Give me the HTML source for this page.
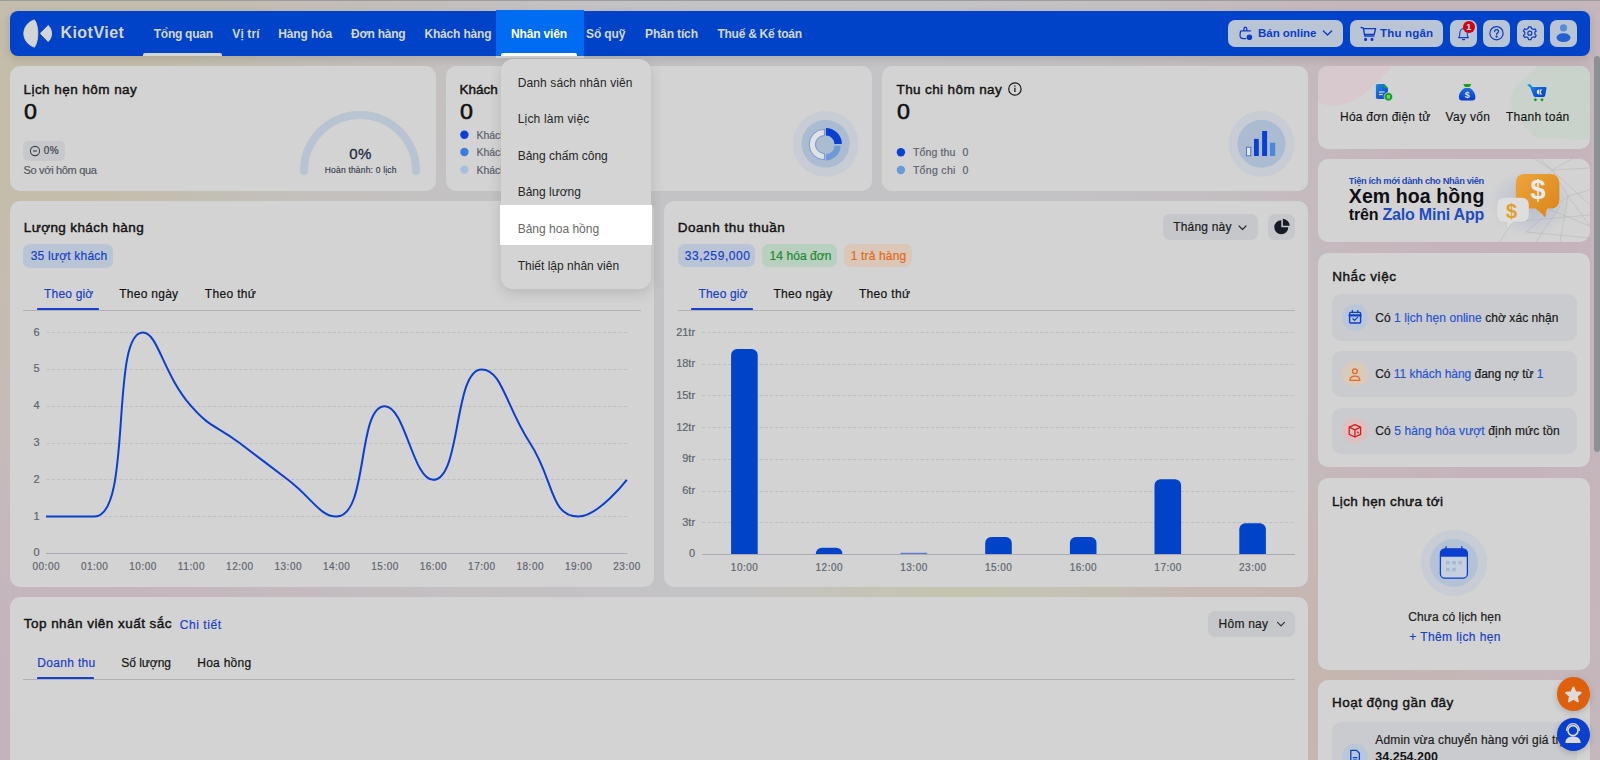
<!DOCTYPE html>
<html><head><meta charset="utf-8">
<style>
*{box-sizing:border-box;margin:0;padding:0}
html,body{width:1600px;height:760px;overflow:hidden}
body{position:relative;font-family:"Liberation Sans",sans-serif;color:#161616;background:#c6bfbe}
.abs{position:absolute}
.card{position:absolute;background:#d3d3d3;border-radius:10px;overflow:hidden}
.t{position:absolute;white-space:nowrap;line-height:1}
.nb{position:absolute;background:#b9c4d4;border-radius:7px}
svg{position:absolute;overflow:visible}
</style></head><body>
<!-- BACKGROUND -->
<div class="abs" style="left:0;top:0;width:1600px;height:760px;background:
 radial-gradient(ellipse 240px 120px at 960px 600px, rgba(197,196,174,1), rgba(197,196,174,0)),
 radial-gradient(ellipse 280px 260px at 1270px 680px, rgba(198,181,171,1), rgba(198,181,171,0)),
 radial-gradient(ellipse 420px 160px at 820px 40px, rgba(196,196,198,1), rgba(196,196,198,0)),
 radial-gradient(ellipse 700px 520px at 760px 330px, rgba(195,196,199,1), rgba(195,196,199,0.75) 50%, rgba(195,196,199,0)),
 radial-gradient(ellipse 560px 380px at 60px 120px, rgba(196,189,166,1), rgba(196,189,166,0)),
 radial-gradient(ellipse 520px 320px at 80px 740px, rgba(196,176,188,1), rgba(196,176,188,0)),
 radial-gradient(ellipse 400px 760px at 1500px 320px, rgba(197,178,187,1), rgba(197,178,187,0)),
 #c4bcbd"></div>
<div class="abs" style="left:0;top:0;width:1600px;height:1px;background:#9c9c9c"></div>
<div class="abs" style="left:1594px;top:56px;width:6px;height:396px;background:#8b9095;border-radius:3px"></div>

<!-- NAVBAR -->
<div class="abs" style="left:10px;top:11px;width:1580px;height:44.8px;background:#0043c8;border-radius:8px;box-shadow:0 3px 10px rgba(0,0,0,0.12)"></div>
<div class="abs" style="left:496.2px;top:55.8px;width:87.4px;height:1.8px;background:#cfcfcf"></div>
<div class="abs" style="left:496.2px;top:10.3px;width:87.4px;height:45.5px;background:#006cf1"></div>
<div class="abs" style="left:143px;top:53.4px;width:79px;height:2.6px;background:#d5d5d5;border-radius:2px 2px 0 0"></div>
<div class="abs" style="left:500.5px;top:53.4px;width:76.5px;height:2.6px;background:#ffffff;border-radius:2px 2px 0 0"></div>
<svg style="left:0;top:0" width="60" height="60">
 <path d="M34.4,19.8 C28.2,21.8 23.8,27.2 23.8,33.5 C23.8,39.8 28.2,45.2 34.4,47.2 C36.9,43.8 37.8,38.8 37.8,33.5 C37.8,28.2 36.9,23.2 34.4,19.8 Z" fill="#d4d4d4" stroke="#d4d4d4" stroke-width="0.8" stroke-linejoin="round"/>
 <path d="M48.2,25.8 C50.3,28 51.4,30.6 51.4,33.5 C51.4,36.4 50.3,39 48.2,41.2 L40.8,33.5 Z" fill="#d4d4d4" stroke="#d4d4d4" stroke-width="1.2" stroke-linejoin="round"/>
</svg>
<div class="nb" style="left:1228px;top:20px;width:115px;height:27px"></div>
<div class="nb" style="left:1350px;top:20px;width:93px;height:27px"></div>
<div class="nb" style="left:1450px;top:20px;width:27px;height:27px"></div>
<div class="nb" style="left:1483px;top:20px;width:27px;height:27px"></div>
<div class="nb" style="left:1517px;top:20px;width:27px;height:27px"></div>
<div class="nb" style="left:1550px;top:20px;width:27px;height:27px"></div>
<svg style="left:0;top:0" width="1600" height="60" fill="none" stroke="#0b3ccc" stroke-width="1.3" stroke-linecap="round" stroke-linejoin="round">
 <!-- bag icon -->
 <path d="M1241.6,30.8 L1250.5,30.8 M1243.6,30.8 L1244.4,27.4 L1246.2,27.4 L1247.2,30.8 M1240.6,31.2 C1240.0,34 1239.8,36.6 1240.6,37.4 C1241,38.4 1243,38.6 1245.6,38.6" />
 <circle cx="1249.4" cy="37.2" r="2.8" fill="#0b3ccc" stroke="none"/>
 <!-- chevron -->
 <path d="M1323.4,31 L1327.5,35 L1331.6,31" stroke-width="1.4"/>
 <!-- cart -->
 <path d="M1361.2,27.5 L1363.4,28.2 L1364.8,36 L1374,36 M1363.6,28.6 L1375.6,28.6 L1374.2,34.4 L1364.6,34.4" stroke-width="1.4"/>
 <circle cx="1365.6" cy="39.4" r="0.9" fill="#0b3ccc"/>
 <circle cx="1372" cy="39.4" r="0.9" fill="#0b3ccc"/>
 <!-- bell -->
 <path d="M1458.6,37.6 L1468.4,37.6 C1467.4,36.6 1467.2,35.4 1467.2,33.4 C1467.2,30.8 1465.6,28.6 1463.5,28.6 C1461.4,28.6 1459.8,30.8 1459.8,33.4 C1459.8,35.4 1459.6,36.6 1458.6,37.6 Z" stroke-width="1.1"/>
 <path d="M1462.4,39.6 L1464.6,39.6" stroke-width="1.1"/>
 <!-- help -->
 <circle cx="1496.5" cy="33.2" r="6.6" stroke-width="1.2"/>
 <path d="M1494.6,31.6 C1494.6,30.4 1495.4,29.6 1496.5,29.6 C1497.7,29.6 1498.5,30.4 1498.5,31.4 C1498.5,32.6 1496.6,33 1496.6,34.4" stroke-width="1.2"/>
 <circle cx="1496.6" cy="36.6" r="0.5" fill="#0b3ccc"/>
 <!-- gear -->
 <path d="M1528.6,26.8 L1531,26.8 L1531.6,28.6 L1533.2,29.5 L1535,28.9 L1536.2,31 L1534.8,32.3 L1534.8,34.1 L1536.2,35.4 L1535,37.5 L1533.2,36.9 L1531.6,37.8 L1531,39.6 L1528.6,39.6 L1528,37.8 L1526.4,36.9 L1524.6,37.5 L1523.4,35.4 L1524.8,34.1 L1524.8,32.3 L1523.4,31 L1524.6,28.9 L1526.4,29.5 L1528,28.6 Z" stroke-width="1.2"/>
 <circle cx="1529.8" cy="33.2" r="2" stroke-width="1.2"/>
 <!-- avatar -->
 <circle cx="1563.5" cy="27.8" r="3.6" fill="#5a8ad8" stroke="none"/>
 <ellipse cx="1563.5" cy="37.6" rx="7" ry="4.4" fill="#1f64d0" stroke="none"/>
</svg>
<div class="abs" style="left:1463px;top:21.4px;width:12px;height:12px;border-radius:50%;background:#d20012"></div>
<div class="t" style="left:1466.2px;top:23.2px;font-size:9px;font-weight:700;color:#ececec">1</div>

<!-- ROW 1 -->
<div class="card" style="left:10px;top:66px;width:426px;height:125px"></div>
<div class="card" style="left:446px;top:66px;width:426px;height:125px"></div>
<div class="card" style="left:882px;top:66px;width:426px;height:125px"></div>
<div class="abs" style="left:23px;top:141px;width:42px;height:20px;background:#c7c8cc;border-radius:5px"></div>
<svg style="left:0;top:0" width="1310" height="200">
 <circle cx="35" cy="151" r="4.6" fill="none" stroke="#3d4350" stroke-width="1.1"/>
 <path d="M33,151 L37,151" stroke="#3d4350" stroke-width="1.1"/>
 <path d="M304,171 A56,56 0 0 1 416,171" fill="none" stroke="#b8c4d2" stroke-width="8" stroke-linecap="round"/>
 <circle cx="464.4" cy="134.7" r="4.2" fill="#0b3fd6"/>
 <circle cx="464.4" cy="152" r="4.2" fill="#3d7cd8"/>
 <circle cx="464.4" cy="169.6" r="4.2" fill="#a9bedc"/>
 <circle cx="825.6" cy="143.8" r="33" fill="#c8cdd5"/>
 <circle cx="825.6" cy="143.8" r="24" fill="#abbcd2"/>
 <path d="M825.90,128.10 A16,16 0 0 1 841.90,144.10 L834.40,144.10 A8.5,8.5 0 0 0 825.90,135.60 Z" fill="#0b3fd0"/>
 <path d="M840.60,145.80 A14.6,14.6 0 0 1 826.00,160.40 L826.00,154.30 A8.5,8.5 0 0 0 834.50,145.80 Z" fill="#6e9bd6"/>
 <path d="M824.40,159.70 A15.2,15.2 0 0 1 824.40,129.30 L824.40,135.50 A9.0,9.0 0 0 0 824.40,153.50 Z" fill="#e2e2e2" stroke="#3a70d4" stroke-width="0.6"/>
 <circle cx="1014.9" cy="89" r="6.2" fill="none" stroke="#1a1a1a" stroke-width="1.2"/>
 <path d="M1014.9,87.8 L1014.9,92" stroke="#1a1a1a" stroke-width="1.3"/>
 <circle cx="1014.9" cy="85.9" r="0.75" fill="#1a1a1a"/>
 <circle cx="900.9" cy="152.3" r="4.2" fill="#0b3fd8"/>
 <circle cx="900.9" cy="170" r="4.2" fill="#6b9ad8"/>
 <circle cx="1261.5" cy="143.8" r="33" fill="#c8cdd5"/>
 <circle cx="1261.5" cy="143.8" r="24" fill="#abbcd2"/>
 <rect x="1246.4" y="147.2" width="4.4" height="8.6" fill="#e6e6e6" stroke="#2a60d0" stroke-width="0.8"/>
 <rect x="1254" y="138.9" width="4.8" height="17.1" fill="#0b3fd0"/>
 <rect x="1262.1" y="131" width="5" height="25" fill="#0b3fd0"/>
 <rect x="1270" y="142.7" width="5.2" height="13.3" fill="#4d88d8"/>
</svg>

<!-- ROW 2 -->
<div class="card" style="left:10px;top:201px;width:644px;height:386px"></div>
<div class="card" style="left:664px;top:201px;width:644px;height:386px"></div>
<div class="abs" style="left:23.3px;top:244px;width:89.7px;height:23.5px;background:#b9c5d5;border-radius:7px"></div>
<div class="abs" style="left:37px;top:308.2px;width:62px;height:2.6px;background:#1b3fd0;border-radius:1px"></div>
<div class="abs" style="left:23.3px;top:310px;width:618px;height:1px;background:#b0b2b6"></div>
<div class="abs" style="left:677.5px;top:244px;width:77.9px;height:23.4px;background:#b9c5d5;border-radius:7px"></div>
<div class="abs" style="left:762.3px;top:244px;width:74.7px;height:23.4px;background:#b9cfbf;border-radius:7px"></div>
<div class="abs" style="left:843.9px;top:244px;width:68.1px;height:23.4px;background:#d9c8b8;border-radius:7px"></div>
<div class="abs" style="left:690.7px;top:308.2px;width:62px;height:2.6px;background:#1b3fd0;border-radius:1px"></div>
<div class="abs" style="left:677.5px;top:310px;width:617.5px;height:1px;background:#b0b2b6"></div>
<div class="abs" style="left:1162.7px;top:214.3px;width:95px;height:26px;background:#c6c7cb;border-radius:7px"></div>
<div class="abs" style="left:1268.3px;top:214.3px;width:26.3px;height:26px;background:#c6c7cb;border-radius:7px"></div>
<svg style="left:0;top:0" width="1310" height="600">
<path d="M46.5,516.5 L627.5,516.5" stroke="#c0c1c4" stroke-width="1" stroke-dasharray="3.6 1.6"/>
<path d="M46.5,479.5 L627.5,479.5" stroke="#c0c1c4" stroke-width="1" stroke-dasharray="3.6 1.6"/>
<path d="M46.5,443.5 L627.5,443.5" stroke="#c0c1c4" stroke-width="1" stroke-dasharray="3.6 1.6"/>
<path d="M46.5,406.5 L627.5,406.5" stroke="#c0c1c4" stroke-width="1" stroke-dasharray="3.6 1.6"/>
<path d="M46.5,369.5 L627.5,369.5" stroke="#c0c1c4" stroke-width="1" stroke-dasharray="3.6 1.6"/>
<path d="M46.5,332.5 L627.5,332.5" stroke="#c0c1c4" stroke-width="1" stroke-dasharray="3.6 1.6"/>
<path d="M46,553.5 L627.5,553.5" stroke="#a9abb2" stroke-width="1"/>
<path d="M46.00,516.60 C46.00,516.60 84.58,516.60 94.40,516.60 C132.98,516.60 109.72,332.60 142.80,332.60 C158.12,332.60 162.56,373.54 191.20,406.20 C210.96,428.74 215.40,424.60 239.60,443.00 C263.80,461.40 263.80,461.40 288.00,479.80 C312.20,498.20 320.17,516.60 336.40,516.60 C368.57,516.60 356.84,406.20 384.80,406.20 C405.24,406.20 412.76,479.80 433.20,479.80 C461.16,479.80 453.64,369.40 481.60,369.40 C502.04,369.40 505.80,406.20 530.00,443.00 C554.20,479.80 549.76,516.60 578.40,516.60 C598.16,516.60 626.80,479.80 626.80,479.80" fill="none" stroke="#0b3fd0" stroke-width="2"/>
<path d="M702,522.5 L1295,522.5" stroke="#c0c1c4" stroke-width="1" stroke-dasharray="3.6 1.6"/>
<path d="M702,491.5 L1295,491.5" stroke="#c0c1c4" stroke-width="1" stroke-dasharray="3.6 1.6"/>
<path d="M702,459.5 L1295,459.5" stroke="#c0c1c4" stroke-width="1" stroke-dasharray="3.6 1.6"/>
<path d="M702,427.5 L1295,427.5" stroke="#c0c1c4" stroke-width="1" stroke-dasharray="3.6 1.6"/>
<path d="M702,395.5 L1295,395.5" stroke="#c0c1c4" stroke-width="1" stroke-dasharray="3.6 1.6"/>
<path d="M702,364.5 L1295,364.5" stroke="#c0c1c4" stroke-width="1" stroke-dasharray="3.6 1.6"/>
<path d="M702,332.5 L1295,332.5" stroke="#c0c1c4" stroke-width="1" stroke-dasharray="3.6 1.6"/>
<path d="M702,554.5 L1295,554.5" stroke="#a9abb2" stroke-width="1"/>
<path d="M731.1,554 L731.1,355.0 A6,6 0 0 1 737.1,349.0 L751.7,349.0 A6,6 0 0 1 757.7,355.0 L757.7,554 Z" fill="#0043c8"/>
<path d="M815.8,554 L815.8,553.7 A6,6 0 0 1 821.8,547.7 L836.4,547.7 A6,6 0 0 1 842.4,553.7 L842.4,554 Z" fill="#0043c8"/>
<rect x="900.5" y="552.8" width="26.6" height="1.2" fill="#5a7ad8"/>
<path d="M985.2,554 L985.2,543.0 A6,6 0 0 1 991.2,537.0 L1005.8,537.0 A6,6 0 0 1 1011.8,543.0 L1011.8,554 Z" fill="#0043c8"/>
<path d="M1069.9,554 L1069.9,543.0 A6,6 0 0 1 1075.9,537.0 L1090.5,537.0 A6,6 0 0 1 1096.5,543.0 L1096.5,554 Z" fill="#0043c8"/>
<path d="M1154.5,554 L1154.5,485.2 A6,6 0 0 1 1160.5,479.2 L1175.1,479.2 A6,6 0 0 1 1181.1,485.2 L1181.1,554 Z" fill="#0043c8"/>
<path d="M1239.3,554 L1239.3,529.3 A6,6 0 0 1 1245.3,523.3 L1259.9,523.3 A6,6 0 0 1 1265.9,529.3 L1265.9,554 Z" fill="#0043c8"/>
</svg>

<!-- ROW 3 -->
<div class="card" style="left:10px;top:597px;width:1298px;height:200px"></div>
<div class="abs" style="left:36.8px;top:677px;width:57.4px;height:2.6px;background:#1b3fd0;border-radius:1px"></div>
<div class="abs" style="left:23.3px;top:679px;width:1271.7px;height:1px;background:#b0b2b6"></div>
<div class="abs" style="left:1208px;top:610.6px;width:86.7px;height:26.8px;background:#c6c7cb;border-radius:7px"></div>
<svg style="left:0;top:0" width="1310" height="760" fill="none" stroke="#303030" stroke-width="1.2" stroke-linecap="round" stroke-linejoin="round">
 <path d="M1239,226 L1242.5,229.5 L1246,226"/>
 <path d="M1277.6,622.4 L1281,625.8 L1284.4,622.4"/>
 <path d="M1281.3,220.3 L1281.3,227.3 L1288.3,227.3 A7,7 0 1 1 1281.3,220.3 Z" fill="#161a22" stroke="none"/>
 <path d="M1282.9,218.8 A7.4,7.4 0 0 1 1289.8,225.7 L1282.9,225.7 Z" fill="#161a22" stroke="none"/>
</svg>

<!-- RIGHT COLUMN -->
<div class="card" style="left:1318px;top:66px;width:272px;height:83px">
 <svg style="left:0;top:0" width="272" height="83"><path d="M0,0 L74,0 C58,18 40,38 18,39.5 C9,40 3,38 0,35 Z" fill="#d7c9cd"/><path d="M220,0 L272,0 L272,74 L219,72 C210,64 197,50 193,40 C190,32 194,24 200,18 Z" fill="#c9d3cb"/></svg>
</div>
<div class="card" style="left:1318px;top:159px;width:272px;height:83px"></div>
<div class="card" style="left:1318px;top:253px;width:272px;height:214px"></div>
<div class="card" style="left:1318px;top:478px;width:272px;height:192px"></div>
<div class="card" style="left:1318px;top:680px;width:272px;height:200px"></div>
<div class="abs" style="left:1332px;top:294px;width:245px;height:47px;background:#cacbcf;border-radius:9px"></div>
<div class="abs" style="left:1332px;top:351px;width:245px;height:46px;background:#cacbcf;border-radius:9px"></div>
<div class="abs" style="left:1332px;top:407.5px;width:245px;height:46.5px;background:#cacbcf;border-radius:9px"></div>
<div class="abs" style="left:1332px;top:722px;width:245px;height:60px;background:#cacbcf;border-radius:9px"></div>
<svg style="left:0;top:0" width="1600" height="760">
 <defs>
  <linearGradient id="gdoc" x1="0" y1="0" x2="1" y2="1"><stop offset="0" stop-color="#1a8ee0"/><stop offset="1" stop-color="#0a3ad0"/></linearGradient>
  <linearGradient id="gbag" x1="0" y1="0" x2="0" y2="1"><stop offset="0" stop-color="#1f6ee0"/><stop offset="1" stop-color="#0a38cc"/></linearGradient>
  <linearGradient id="gcart" x1="0" y1="0" x2="1" y2="1"><stop offset="0" stop-color="#1aa0e8"/><stop offset="0.5" stop-color="#1060d8"/><stop offset="1" stop-color="#0a3ccc"/></linearGradient>
  <linearGradient id="gor" x1="0" y1="0" x2="1" y2="1"><stop offset="0" stop-color="#eea43a"/><stop offset="1" stop-color="#d98518"/></linearGradient>
  <radialGradient id="gsh" cx="0.5" cy="0.5" r="0.5"><stop offset="0" stop-color="#9aa8c8" stop-opacity="0.55"/><stop offset="1" stop-color="#9aa8c8" stop-opacity="0"/></radialGradient>
  <clipPath id="cbn"><rect x="1318" y="159" width="272" height="83" rx="10"/></clipPath>
 </defs>
 <!-- doc icon -->
 <path d="M1377.4,83.9 L1384,83.9 L1387.9,88 L1387.9,97.2 Q1387.9,98.9 1386.2,98.9 L1377.6,98.9 Q1375.9,98.9 1375.9,97.2 L1375.9,85.6 Q1375.9,83.9 1377.4,83.9 Z" fill="url(#gdoc)"/>
 <path d="M1384,83.9 L1387.9,88 L1384,88 Z" fill="#12a020"/>
 <rect x="1379" y="91.4" width="5.6" height="1.2" fill="#d8dce8"/>
 <rect x="1379" y="93.9" width="3.8" height="1.2" fill="#d8dce8"/>
 <circle cx="1388.4" cy="96.8" r="4.3" fill="#14a41c" stroke="#d3d3d3" stroke-width="0.8"/>
 <rect x="1386.9" y="95" width="3" height="3.6" fill="#7ccc80"/>
 <!-- money bag -->
 <path d="M1463.2,84 L1471.4,84 L1469.6,87 L1465,87 Z" fill="#12a41a"/>
 <path d="M1465,88 L1469.6,88 C1473.4,90 1475.6,94 1475.4,97.6 C1475.3,99.8 1474.2,100.6 1472.4,100.6 L1461.9,100.6 C1460.1,100.6 1459,99.8 1458.9,97.6 C1458.7,94 1460.9,90 1465,88 Z" fill="url(#gbag)"/>
 <text x="1467.2" y="97.6" font-family="Liberation Sans" font-size="9" font-weight="700" fill="#dfe3ee" text-anchor="middle">$</text>
 <!-- cart -->
 <path d="M1527.6,84.6 C1528.4,84 1529.6,84 1530.6,84.6 L1532.4,86.9 L1545.4,86.9 C1546.2,86.9 1546.6,87.6 1546.4,88.4 L1545.2,95.6 C1545,96.4 1544.4,96.9 1543.6,96.9 L1535,96.9 C1534.2,96.9 1533.6,96.4 1533.4,95.6 L1530.2,87.4 L1528.2,86 C1527.4,85.6 1527.2,85 1527.6,84.6 Z" fill="url(#gcart)"/>
 <path d="M1539.2,89.3 C1537.6,89.6 1536.8,90.8 1536.8,92 C1536.8,93.2 1537.6,94.4 1539.2,94.7 Z M1540,89.6 L1542.2,89.6 L1540.6,92 L1542.2,94.4 L1540,94.4 L1539.6,92 Z" fill="#dfe3ee"/>
 <path d="M1535.4,98 L1537.2,99.8 L1535.4,101.6 L1533.6,99.8 Z M1542,98 L1543.8,99.8 L1542,101.6 L1540.2,99.8 Z" fill="#10a020"/>

 <!-- banner network lines -->
 <g clip-path="url(#cbn)" stroke="#b8b8bc" stroke-width="0.6" fill="none">
  <path d="M1535,159 L1552,170 L1590,168 M1552,170 L1568,196 L1590,190 M1568,196 L1560,242 M1568,196 L1590,226 M1552,170 L1526,200 L1500,242 M1568,196 L1526,232 L1590,238 M1540,159 L1590,205 M1572,159 L1552,170 M1526,200 L1590,226 M1536,242 L1560,206 M1510,222 L1590,215"/>
 </g>
 <!-- bubbles -->
 <ellipse cx="1530" cy="203" rx="42" ry="34" fill="url(#gsh)"/>
 <path d="M1525,173.9 L1550,173.9 Q1559.4,173.9 1559.4,183.4 L1559.4,199.4 Q1559.4,208.4 1550.4,208.4 L1547.2,208.4 Q1545.6,212 1545.4,217.6 Q1540.4,212 1535.6,208.4 L1525,208.4 Q1515.8,208.4 1515.8,199.2 L1515.8,183.2 Q1515.8,173.9 1525,173.9 Z" fill="url(#gor)"/>
 <text x="1538" y="199.4" font-family="Liberation Sans" font-size="27" font-weight="700" fill="#ebebeb" text-anchor="middle">$</text>
 <path d="M1505,197.7 L1521,197.7 Q1528.8,197.7 1528.8,205.5 L1528.8,214 Q1528.8,221.8 1521,221.8 L1513.4,221.8 Q1510,224.6 1507.6,228.2 Q1507,224.4 1507.4,221.8 L1505,221.8 Q1497.2,221.8 1497.2,214 L1497.2,205.5 Q1497.2,197.7 1505,197.7 Z" fill="#dedede"/>
 <text x="1511.6" y="217.6" font-family="Liberation Sans" font-size="20" font-weight="700" fill="#e2a028" text-anchor="middle">$</text>

 <!-- nhac viec icons -->
 <circle cx="1355.1" cy="317.4" r="13.2" fill="#bac7d8"/>
 <circle cx="1354.9" cy="374.1" r="13" fill="#d9cbba"/>
 <circle cx="1354.9" cy="430.7" r="13" fill="#dbc1c2"/>
 <g fill="none" stroke="#0b3fd0" stroke-width="1.4" stroke-linejoin="round" stroke-linecap="round">
  <rect x="1349.6" y="312.4" width="11" height="10.6" rx="1"/>
  <path d="M1349.6,315.4 L1360.6,315.4" stroke-width="2.2"/>
  <path d="M1352.4,310.8 L1352.4,312.6 M1357.8,310.8 L1357.8,312.6"/>
  <path d="M1352.8,318.8 L1354.6,320.4 L1357.6,317.4" stroke-width="1.2"/>
 </g>
 <g fill="none" stroke="#e86a1a" stroke-width="1.3" stroke-linecap="round">
  <circle cx="1354.9" cy="371.3" r="2.4"/>
  <path d="M1350,380.4 C1350,377.6 1352,376.2 1354.9,376.2 C1357.8,376.2 1359.8,377.6 1359.8,380.4 Z" stroke-linejoin="round"/>
 </g>
 <g fill="none" stroke="#dc1a1a" stroke-width="1.3" stroke-linejoin="round">
  <path d="M1354.9,424.6 L1360.6,427.2 L1360.6,434.4 L1354.9,437 L1349.2,434.4 L1349.2,427.2 Z"/>
  <path d="M1349.2,427.2 L1354.9,429.8 L1360.6,427.2 M1354.9,429.8 L1354.9,437"/>
  <path d="M1357.2,431.6 L1358.8,433.4"/>
 </g>

 <!-- lich hen chua toi icon -->
 <circle cx="1454" cy="562.8" r="33.3" fill="#c8cdd5"/>
 <circle cx="1454" cy="562.8" r="24" fill="#b3c2d5"/>
 <rect x="1440.4" y="548.8" width="27" height="29.4" rx="4.5" fill="#c6d0de" stroke="#0b3fd0" stroke-width="1.3"/>
 <path d="M1440.4,553.4 Q1440.4,548.8 1445,548.8 L1462.8,548.8 Q1467.4,548.8 1467.4,553.4 L1467.4,556.8 L1440.4,556.8 Z" fill="#0b3fd0"/>
 <path d="M1446,546.6 L1446,549.6 M1461.8,546.6 L1461.8,549.6" stroke="#0b3fd0" stroke-width="1.3" stroke-linecap="round"/>
 <g fill="#a8b8d2">
  <rect x="1446" y="561" width="3.6" height="3.4"/><rect x="1452.2" y="561" width="3.6" height="3.4"/><rect x="1458.4" y="561" width="3.6" height="3.4"/>
  <rect x="1446" y="567.8" width="3.6" height="3.4"/><rect x="1452.2" y="567.8" width="3.6" height="3.4"/>
 </g>

 <!-- hoat dong icon -->
 <circle cx="1355" cy="756.4" r="13" fill="#bac7d8"/>
 <path d="M1350.8,750.4 L1356.6,750.4 L1359.4,753.2 L1359.4,763 L1350.8,763 Z" fill="none" stroke="#0b3fd0" stroke-width="1.3" stroke-linejoin="round"/>
 <path d="M1352.8,757.6 L1357.4,757.6 M1352.8,760 L1357.4,760" stroke="#0b3fd0" stroke-width="1.1"/>
</svg>


<div class="t" style="left:60.40px;top:25.25px;font-size:16px;font-weight:700;color:#d4d4d4;letter-spacing:0.478px;">KiotViet</div>
<div class="t" style="left:153.80px;top:27.59px;font-size:12px;font-weight:700;color:#d3d7e1;letter-spacing:-0.266px;">Tổng quan</div>
<div class="t" style="left:232.30px;top:27.59px;font-size:12px;font-weight:700;color:#d3d7e1;letter-spacing:0.106px;">Vị trí</div>
<div class="t" style="left:278.20px;top:27.59px;font-size:12px;font-weight:700;color:#d3d7e1;letter-spacing:-0.082px;">Hàng hóa</div>
<div class="t" style="left:351.00px;top:27.59px;font-size:12px;font-weight:700;color:#d3d7e1;letter-spacing:-0.290px;">Đơn hàng</div>
<div class="t" style="left:424.50px;top:27.59px;font-size:12px;font-weight:700;color:#d3d7e1;letter-spacing:-0.186px;">Khách hàng</div>
<div class="t" style="left:511.00px;top:27.59px;font-size:12px;font-weight:700;color:#ffffff;letter-spacing:-0.170px;">Nhân viên</div>
<div class="t" style="left:586.00px;top:27.59px;font-size:12px;font-weight:700;color:#d3d7e1;letter-spacing:-0.103px;">Sổ quỹ</div>
<div class="t" style="left:645.00px;top:27.59px;font-size:12px;font-weight:700;color:#d3d7e1;letter-spacing:-0.127px;">Phân tích</div>
<div class="t" style="left:717.50px;top:27.59px;font-size:12px;font-weight:700;color:#d3d7e1;letter-spacing:-0.270px;">Thuế &amp; Kế toán</div>
<div class="t" style="left:1258.00px;top:27.56px;font-size:11.5px;font-weight:700;color:#0b3ccc;letter-spacing:-0.031px;">Bán online</div>
<div class="t" style="left:1380.00px;top:27.56px;font-size:11.5px;font-weight:700;color:#0b3ccc;letter-spacing:0.179px;">Thu ngân</div>
<div class="t" style="left:23.50px;top:82.87px;font-size:13.5px;font-weight:400;color:#141414;letter-spacing:0.448px;-webkit-text-stroke:0.45px #141414">Lịch hẹn hôm nay</div>
<div class="t" style="left:23.60px;top:100.85px;font-size:21.2px;font-weight:400;color:#101010;-webkit-text-stroke:0.55px #101010;transform:scaleX(1.1);transform-origin:left">0</div>
<div class="t" style="left:43.70px;top:146.03px;font-size:10px;font-weight:400;color:#3d4350;letter-spacing:0.547px;-webkit-text-stroke-width:0.2px;">0%</div>
<div class="t" style="left:23.50px;top:164.89px;font-size:11px;font-weight:400;color:#555a64;letter-spacing:-0.319px;-webkit-text-stroke-width:0.2px;">So với hôm qua</div>
<div class="t" style="left:349.30px;top:145.60px;font-size:15px;font-weight:400;color:#1d2a3e;letter-spacing:0.312px;-webkit-text-stroke:0.3px #1d2a3e">0%</div>
<div class="t" style="left:324.80px;top:166.00px;font-size:8.5px;font-weight:400;color:#333c4c;letter-spacing:0.186px;-webkit-text-stroke:0.15px #333c4c">Hoàn thành: 0 lịch</div>
<div class="t" style="left:459.50px;top:82.87px;font-size:13.5px;font-weight:400;color:#141414;-webkit-text-stroke:0.45px #141414">Khách hàng hôm nay</div>
<div class="t" style="left:459.60px;top:100.85px;font-size:21.2px;font-weight:400;color:#101010;-webkit-text-stroke:0.55px #101010;transform:scaleX(1.1);transform-origin:left">0</div>
<div class="t" style="left:476.40px;top:129.71px;font-size:10.5px;font-weight:400;color:#5a6070;-webkit-text-stroke-width:0.2px;">Khách mới</div>
<div class="t" style="left:476.40px;top:147.01px;font-size:10.5px;font-weight:400;color:#5a6070;-webkit-text-stroke-width:0.2px;">Khách quay lại</div>
<div class="t" style="left:476.40px;top:164.61px;font-size:10.5px;font-weight:400;color:#5a6070;-webkit-text-stroke-width:0.2px;">Khách vãng lai</div>
<div class="t" style="left:896.50px;top:82.87px;font-size:13.5px;font-weight:400;color:#141414;letter-spacing:0.385px;-webkit-text-stroke:0.45px #141414">Thu chi hôm nay</div>
<div class="t" style="left:896.60px;top:100.85px;font-size:21.2px;font-weight:400;color:#101010;-webkit-text-stroke:0.55px #101010;transform:scaleX(1.1);transform-origin:left">0</div>
<div class="t" style="left:912.90px;top:147.21px;font-size:10.5px;font-weight:400;color:#5d6270;letter-spacing:0.150px;-webkit-text-stroke-width:0.2px;">Tổng thu</div>
<div class="t" style="left:962.60px;top:147.21px;font-size:10.5px;font-weight:400;color:#5d6270;-webkit-text-stroke-width:0.2px;">0</div>
<div class="t" style="left:912.90px;top:164.81px;font-size:10.5px;font-weight:400;color:#5d6270;letter-spacing:0.317px;-webkit-text-stroke-width:0.2px;">Tổng chi</div>
<div class="t" style="left:962.60px;top:164.81px;font-size:10.5px;font-weight:400;color:#5d6270;-webkit-text-stroke-width:0.2px;">0</div>
<div class="t" style="left:23.80px;top:221.37px;font-size:13.5px;font-weight:400;color:#141414;letter-spacing:0.394px;-webkit-text-stroke:0.45px #141414">Lượng khách hàng</div>
<div class="t" style="left:30.70px;top:249.84px;font-size:12px;font-weight:400;color:#1a3fc6;letter-spacing:0.212px;-webkit-text-stroke-width:0.2px;">35 lượt khách</div>
<div class="t" style="left:44.10px;top:287.84px;font-size:12px;font-weight:400;color:#1a3fc6;letter-spacing:0.171px;-webkit-text-stroke-width:0.2px;">Theo giờ</div>
<div class="t" style="left:119.20px;top:287.84px;font-size:12px;font-weight:400;color:#141414;letter-spacing:0.273px;-webkit-text-stroke-width:0.2px;">Theo ngày</div>
<div class="t" style="left:204.80px;top:287.84px;font-size:12px;font-weight:400;color:#141414;letter-spacing:0.338px;-webkit-text-stroke-width:0.2px;">Theo thứ</div>
<div class="t" style="left:33.38px;top:547.49px;font-size:11px;font-weight:400;color:#5f6670;-webkit-text-stroke-width:0.2px;">0</div>
<div class="t" style="left:33.38px;top:510.69px;font-size:11px;font-weight:400;color:#5f6670;-webkit-text-stroke-width:0.2px;">1</div>
<div class="t" style="left:33.38px;top:473.89px;font-size:11px;font-weight:400;color:#5f6670;-webkit-text-stroke-width:0.2px;">2</div>
<div class="t" style="left:33.38px;top:437.09px;font-size:11px;font-weight:400;color:#5f6670;-webkit-text-stroke-width:0.2px;">3</div>
<div class="t" style="left:33.38px;top:400.29px;font-size:11px;font-weight:400;color:#5f6670;-webkit-text-stroke-width:0.2px;">4</div>
<div class="t" style="left:33.38px;top:363.49px;font-size:11px;font-weight:400;color:#5f6670;-webkit-text-stroke-width:0.2px;">5</div>
<div class="t" style="left:33.38px;top:326.69px;font-size:11px;font-weight:400;color:#5f6670;-webkit-text-stroke-width:0.2px;">6</div>
<div class="t" style="left:32.50px;top:561.83px;font-size:10px;font-weight:400;color:#5f6670;letter-spacing:0.492px;-webkit-text-stroke-width:0.2px;">00:00</div>
<div class="t" style="left:80.90px;top:561.83px;font-size:10px;font-weight:400;color:#5f6670;letter-spacing:0.492px;-webkit-text-stroke-width:0.2px;">01:00</div>
<div class="t" style="left:129.30px;top:561.83px;font-size:10px;font-weight:400;color:#5f6670;letter-spacing:0.492px;-webkit-text-stroke-width:0.2px;">10:00</div>
<div class="t" style="left:177.70px;top:561.83px;font-size:10px;font-weight:400;color:#5f6670;letter-spacing:0.676px;-webkit-text-stroke-width:0.2px;">11:00</div>
<div class="t" style="left:226.10px;top:561.83px;font-size:10px;font-weight:400;color:#5f6670;letter-spacing:0.492px;-webkit-text-stroke-width:0.2px;">12:00</div>
<div class="t" style="left:274.50px;top:561.83px;font-size:10px;font-weight:400;color:#5f6670;letter-spacing:0.492px;-webkit-text-stroke-width:0.2px;">13:00</div>
<div class="t" style="left:322.90px;top:561.83px;font-size:10px;font-weight:400;color:#5f6670;letter-spacing:0.492px;-webkit-text-stroke-width:0.2px;">14:00</div>
<div class="t" style="left:371.30px;top:561.83px;font-size:10px;font-weight:400;color:#5f6670;letter-spacing:0.492px;-webkit-text-stroke-width:0.2px;">15:00</div>
<div class="t" style="left:419.70px;top:561.83px;font-size:10px;font-weight:400;color:#5f6670;letter-spacing:0.492px;-webkit-text-stroke-width:0.2px;">16:00</div>
<div class="t" style="left:468.10px;top:561.83px;font-size:10px;font-weight:400;color:#5f6670;letter-spacing:0.492px;-webkit-text-stroke-width:0.2px;">17:00</div>
<div class="t" style="left:516.50px;top:561.83px;font-size:10px;font-weight:400;color:#5f6670;letter-spacing:0.492px;-webkit-text-stroke-width:0.2px;">18:00</div>
<div class="t" style="left:564.90px;top:561.83px;font-size:10px;font-weight:400;color:#5f6670;letter-spacing:0.492px;-webkit-text-stroke-width:0.2px;">19:00</div>
<div class="t" style="left:613.30px;top:561.83px;font-size:10px;font-weight:400;color:#5f6670;letter-spacing:0.492px;-webkit-text-stroke-width:0.2px;">23:00</div>
<div class="t" style="left:677.80px;top:220.57px;font-size:13.5px;font-weight:400;color:#141414;letter-spacing:0.518px;-webkit-text-stroke:0.45px #141414">Doanh thu thuần</div>
<div class="t" style="left:684.70px;top:249.84px;font-size:12px;font-weight:400;color:#1a3fc6;letter-spacing:0.582px;-webkit-text-stroke-width:0.2px;">33,259,000</div>
<div class="t" style="left:769.60px;top:249.84px;font-size:12px;font-weight:400;color:#1f8a30;letter-spacing:0.070px;-webkit-text-stroke-width:0.2px;">14 hóa đơn</div>
<div class="t" style="left:850.80px;top:249.84px;font-size:12px;font-weight:400;color:#e26a1c;letter-spacing:0.150px;-webkit-text-stroke-width:0.2px;">1 trả hàng</div>
<div class="t" style="left:698.50px;top:288.34px;font-size:12px;font-weight:400;color:#1a3fc6;letter-spacing:0.156px;-webkit-text-stroke-width:0.2px;">Theo giờ</div>
<div class="t" style="left:773.50px;top:288.34px;font-size:12px;font-weight:400;color:#141414;letter-spacing:0.260px;-webkit-text-stroke-width:0.2px;">Theo ngày</div>
<div class="t" style="left:858.90px;top:288.34px;font-size:12px;font-weight:400;color:#141414;letter-spacing:0.338px;-webkit-text-stroke-width:0.2px;">Theo thứ</div>
<div class="t" style="left:1173.20px;top:221.34px;font-size:12px;font-weight:400;color:#202020;letter-spacing:0.198px;-webkit-text-stroke-width:0.2px;">Tháng này</div>
<div class="t" style="left:688.98px;top:548.49px;font-size:11px;font-weight:400;color:#5f6670;-webkit-text-stroke-width:0.2px;">0</div>
<div class="t" style="left:682.26px;top:516.80px;font-size:11px;font-weight:400;color:#5f6670;-webkit-text-stroke-width:0.2px;">3tr</div>
<div class="t" style="left:682.26px;top:485.11px;font-size:11px;font-weight:400;color:#5f6670;-webkit-text-stroke-width:0.2px;">6tr</div>
<div class="t" style="left:682.26px;top:453.42px;font-size:11px;font-weight:400;color:#5f6670;-webkit-text-stroke-width:0.2px;">9tr</div>
<div class="t" style="left:676.13px;top:421.73px;font-size:11px;font-weight:400;color:#5f6670;-webkit-text-stroke-width:0.2px;">12tr</div>
<div class="t" style="left:676.13px;top:390.04px;font-size:11px;font-weight:400;color:#5f6670;-webkit-text-stroke-width:0.2px;">15tr</div>
<div class="t" style="left:676.13px;top:358.35px;font-size:11px;font-weight:400;color:#5f6670;-webkit-text-stroke-width:0.2px;">18tr</div>
<div class="t" style="left:676.13px;top:326.66px;font-size:11px;font-weight:400;color:#5f6670;-webkit-text-stroke-width:0.2px;">21tr</div>
<div class="t" style="left:730.85px;top:562.53px;font-size:10px;font-weight:400;color:#5f6670;letter-spacing:0.492px;-webkit-text-stroke-width:0.2px;">10:00</div>
<div class="t" style="left:815.55px;top:562.53px;font-size:10px;font-weight:400;color:#5f6670;letter-spacing:0.492px;-webkit-text-stroke-width:0.2px;">12:00</div>
<div class="t" style="left:900.25px;top:562.53px;font-size:10px;font-weight:400;color:#5f6670;letter-spacing:0.492px;-webkit-text-stroke-width:0.2px;">13:00</div>
<div class="t" style="left:984.95px;top:562.53px;font-size:10px;font-weight:400;color:#5f6670;letter-spacing:0.492px;-webkit-text-stroke-width:0.2px;">15:00</div>
<div class="t" style="left:1069.65px;top:562.53px;font-size:10px;font-weight:400;color:#5f6670;letter-spacing:0.492px;-webkit-text-stroke-width:0.2px;">16:00</div>
<div class="t" style="left:1154.35px;top:562.53px;font-size:10px;font-weight:400;color:#5f6670;letter-spacing:0.492px;-webkit-text-stroke-width:0.2px;">17:00</div>
<div class="t" style="left:1239.05px;top:562.53px;font-size:10px;font-weight:400;color:#5f6670;letter-spacing:0.492px;-webkit-text-stroke-width:0.2px;">23:00</div>
<div class="t" style="left:23.80px;top:617.27px;font-size:13.5px;font-weight:400;color:#141414;letter-spacing:0.457px;-webkit-text-stroke:0.45px #141414">Top nhân viên xuất sắc</div>
<div class="t" style="left:179.80px;top:618.54px;font-size:12px;font-weight:400;color:#1a3fc6;letter-spacing:0.549px;-webkit-text-stroke-width:0.2px;">Chi tiết</div>
<div class="t" style="left:37.30px;top:657.24px;font-size:12px;font-weight:400;color:#1a3fc6;letter-spacing:0.314px;-webkit-text-stroke-width:0.2px;">Doanh thu</div>
<div class="t" style="left:121.30px;top:657.24px;font-size:12px;font-weight:400;color:#141414;letter-spacing:-0.034px;-webkit-text-stroke-width:0.2px;">Số lượng</div>
<div class="t" style="left:197.20px;top:657.24px;font-size:12px;font-weight:400;color:#141414;letter-spacing:0.279px;-webkit-text-stroke-width:0.2px;">Hoa hồng</div>
<div class="t" style="left:1218.60px;top:618.34px;font-size:12px;font-weight:400;color:#202020;letter-spacing:0.228px;-webkit-text-stroke-width:0.2px;">Hôm nay</div>
<div class="t" style="left:1340.10px;top:111.34px;font-size:12px;font-weight:400;color:#151515;letter-spacing:0.215px;-webkit-text-stroke:0.15px #151515">Hóa đơn điện tử</div>
<div class="t" style="left:1445.60px;top:111.34px;font-size:12px;font-weight:400;color:#151515;letter-spacing:0.305px;-webkit-text-stroke:0.15px #151515">Vay vốn</div>
<div class="t" style="left:1505.90px;top:111.34px;font-size:12px;font-weight:400;color:#151515;letter-spacing:0.298px;-webkit-text-stroke:0.15px #151515">Thanh toán</div>
<div class="t" style="left:1348.80px;top:176.53px;font-size:9.3px;font-weight:700;color:#2249b8;letter-spacing:-0.347px;">Tiện ích mới dành cho Nhân viên</div>
<div class="t" style="left:1348.80px;top:186.69px;font-size:19.5px;font-weight:700;color:#0e0e14;letter-spacing:0.105px;">Xem hoa hồng</div>
<div class="t" style="left:1348.80px;top:206.95px;font-size:16px;font-weight:700;color:#0e0e14;letter-spacing:-0.203px;">trên <span style="color:#1f4bc4">Zalo Mini App</span></div>
<div class="t" style="left:1332.20px;top:269.57px;font-size:13.5px;font-weight:400;color:#141414;letter-spacing:0.565px;-webkit-text-stroke:0.45px #141414">Nhắc việc</div>
<div class="t" style="left:1375.20px;top:311.54px;font-size:12px;font-weight:400;color:#1a1a1a;letter-spacing:0.061px;-webkit-text-stroke-width:0.2px;">Có <span style="color:#2a55d0">1 lịch hẹn online</span> chờ xác nhận</div>
<div class="t" style="left:1375.20px;top:368.34px;font-size:12px;font-weight:400;color:#1a1a1a;letter-spacing:-0.031px;-webkit-text-stroke-width:0.2px;">Có <span style="color:#2a55d0">11 khách hàng</span> đang nợ từ <span style="color:#2a55d0">1</span></div>
<div class="t" style="left:1375.20px;top:425.04px;font-size:12px;font-weight:400;color:#1a1a1a;letter-spacing:0.129px;-webkit-text-stroke-width:0.2px;">Có <span style="color:#2a55d0">5 hàng hóa vượt</span> định mức tồn</div>
<div class="t" style="left:1331.90px;top:494.87px;font-size:13.5px;font-weight:400;color:#141414;letter-spacing:0.378px;-webkit-text-stroke:0.45px #141414">Lịch hẹn chưa tới</div>
<div class="t" style="left:1408.30px;top:611.34px;font-size:12px;font-weight:400;color:#1e1e1e;letter-spacing:0.117px;-webkit-text-stroke-width:0.2px;">Chưa có lịch hẹn</div>
<div class="t" style="left:1409.20px;top:630.84px;font-size:12px;font-weight:400;color:#1a3fc6;letter-spacing:0.414px;-webkit-text-stroke-width:0.2px;">+ Thêm lịch hẹn</div>
<div class="t" style="left:1332.10px;top:696.47px;font-size:13.5px;font-weight:400;color:#141414;letter-spacing:0.444px;-webkit-text-stroke:0.45px #141414">Hoạt động gần đây</div>
<div class="t" style="left:1375.30px;top:733.84px;font-size:12px;font-weight:400;color:#1e1e1e;letter-spacing:0.135px;-webkit-text-stroke-width:0.2px;">Admin vừa chuyển hàng với giá trị</div>
<div class="t" style="left:1375.30px;top:751.42px;font-size:12.5px;font-weight:700;color:#141414;">34,254,200</div>
<div class="t" style="left:517.70px;top:76.64px;font-size:12px;font-weight:400;color:#262626;letter-spacing:0.114px;z-index:50">Danh sách nhân viên</div>
<div class="t" style="left:517.70px;top:113.24px;font-size:12px;font-weight:400;color:#262626;letter-spacing:0.187px;z-index:50">Lịch làm việc</div>
<div class="t" style="left:517.70px;top:149.84px;font-size:12px;font-weight:400;color:#262626;z-index:50">Bảng chấm công</div>
<div class="t" style="left:517.70px;top:186.44px;font-size:12px;font-weight:400;color:#262626;z-index:50">Bảng lương</div>
<div class="t" style="left:517.70px;top:223.04px;font-size:12px;font-weight:400;color:#6a6a6a;z-index:50">Bảng hoa hồng</div>
<div class="t" style="left:517.70px;top:259.64px;font-size:12px;font-weight:400;color:#262626;z-index:50">Thiết lập nhân viên</div>

<!-- DROPDOWN -->
<div class="abs" style="left:501px;top:59px;width:150px;height:230px;background:#d4d4d4;border-radius:12px;box-shadow:0 4px 14px rgba(0,0,0,0.13);z-index:40"></div>
<div class="abs" style="left:500px;top:205px;width:152px;height:40px;background:#ffffff;z-index:41"></div>

<!-- FABs -->
<div class="abs" style="left:1556.5px;top:677.4px;width:33.4px;height:33.4px;border-radius:50%;background:#de5f0c;box-shadow:0 2px 6px rgba(0,0,0,0.18);z-index:60"></div>
<div class="abs" style="left:1556.5px;top:717.6px;width:33.4px;height:33.4px;border-radius:50%;background:#0b40cf;box-shadow:0 2px 6px rgba(0,0,0,0.18);z-index:60"></div>
<svg style="left:0;top:0;z-index:61" width="1600" height="760">
 <path d="M1573.40,687.60 L1575.46,692.37 L1580.63,692.85 L1576.73,696.28 L1577.87,701.35 L1573.40,698.70 L1568.93,701.35 L1570.07,696.28 L1566.17,692.85 L1571.34,692.37 Z" fill="#dcdcdc" stroke="#dcdcdc" stroke-width="2" stroke-linejoin="round"/>
 <circle cx="1573" cy="730.6" r="5" fill="none" stroke="#d8d8e0" stroke-width="1.6"/>
 <path d="M1565.4,743 C1565.4,738.6 1568.6,736.6 1573,736.6 C1577.4,736.6 1580.6,738.6 1580.6,743 Z" fill="#d8d8e0"/>
 <path d="M1566.6,731 C1566.6,726.6 1569.4,723.6 1573,723.6 C1576.6,723.6 1579.4,726.6 1579.4,731" fill="none" stroke="#d8d8e0" stroke-width="1.4"/>
</svg>
</body></html>
